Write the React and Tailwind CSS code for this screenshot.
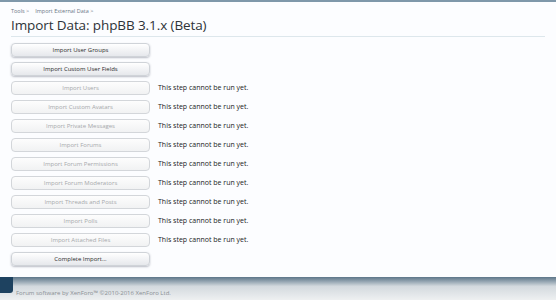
// Import data step list (XenForo admin style)
const steps = [
  { label: 'Import User Groups', enabled: true },
  { label: 'Import Custom User Fields', enabled: true },
  { label: 'Import Users' },
  { label: 'Import Custom Avatars' },
  { label: 'Import Private Messages' },
  { label: 'Import Forums' },
  { label: 'Import Forum Permissions' },
  { label: 'Import Forum Moderators' },
  { label: 'Import Threads and Posts' },
  { label: 'Import Polls' },
  { label: 'Import Attached Files' },
  { label: 'Complete Import...', enabled: true, noNote: true },
];

function StepButton({ label, enabled }) {
  return (
    <button
      type="button"
      className={`w-[139px] h-[14px] rounded-[4px] border text-[6px] leading-none flex items-center justify-center ${
        enabled
          ? 'border-[#cfd3d8] bg-gradient-to-b from-[#ffffff] to-[#e6e8ec] text-[#2b2b2b] shadow-[0_1px_2px_rgba(60,70,90,0.35)]'
          : 'border-[#d3d6da] bg-gradient-to-b from-[#fdfdfd] to-[#f1f2f3] text-[#a6a8ab]'
      }`}
    >
      {label}
    </button>
  );
}

export default function App() {
  return (
    <div className="w-full h-[300px] bg-[#eceef0] flex flex-col overflow-hidden" style={{ fontFamily: '"Open Sans", "DejaVu Sans", sans-serif' }}>
      <div className="h-[2px] bg-[#7f98aa]" />
      <div className="h-[275px] bg-[#fcfdff] px-[11px] pt-[5px] flex flex-col">
        <div className="flex gap-[6px] text-[5.5px] leading-[8px] text-[#6b7785]">
          <span>Tools &gt;</span>
          <span>Import External Data &gt;</span>
        </div>
        <h1 className="mt-[1px] text-[13.5px] tracking-[-0.1px] leading-[18px] text-[#2e3338]">Import Data: phpBB 3.1.x (Beta)</h1>
        <div className="mt-[2px] h-px bg-[#dde7ec]" />
        <div className="mt-[6px] flex flex-col gap-[5px]">
          {steps.map((s) => (
            <div key={s.label} className="flex items-center h-[14px]">
              <StepButton label={s.label} enabled={s.enabled} />
              {!s.enabled && (
                <span className="ml-[8px] text-[7px] text-[#222]">This step cannot be run yet.</span>
              )}
            </div>
          ))}
        </div>
      </div>
      <div className="relative flex-1 bg-gradient-to-b from-[#5d7689] via-[#d3d9de] via-40% to-[#eef0f1]">
        <div className="absolute left-0 top-0 w-[13px] h-[16px] bg-[#1e4260] rounded-br-[3px]" />
        <div className="absolute left-[16px] top-[12px] text-[6px] text-[#8a8f94]">
          Forum software by XenForo™ ©2010-2016 XenForo Ltd.
        </div>
      </div>
    </div>
  );
}
